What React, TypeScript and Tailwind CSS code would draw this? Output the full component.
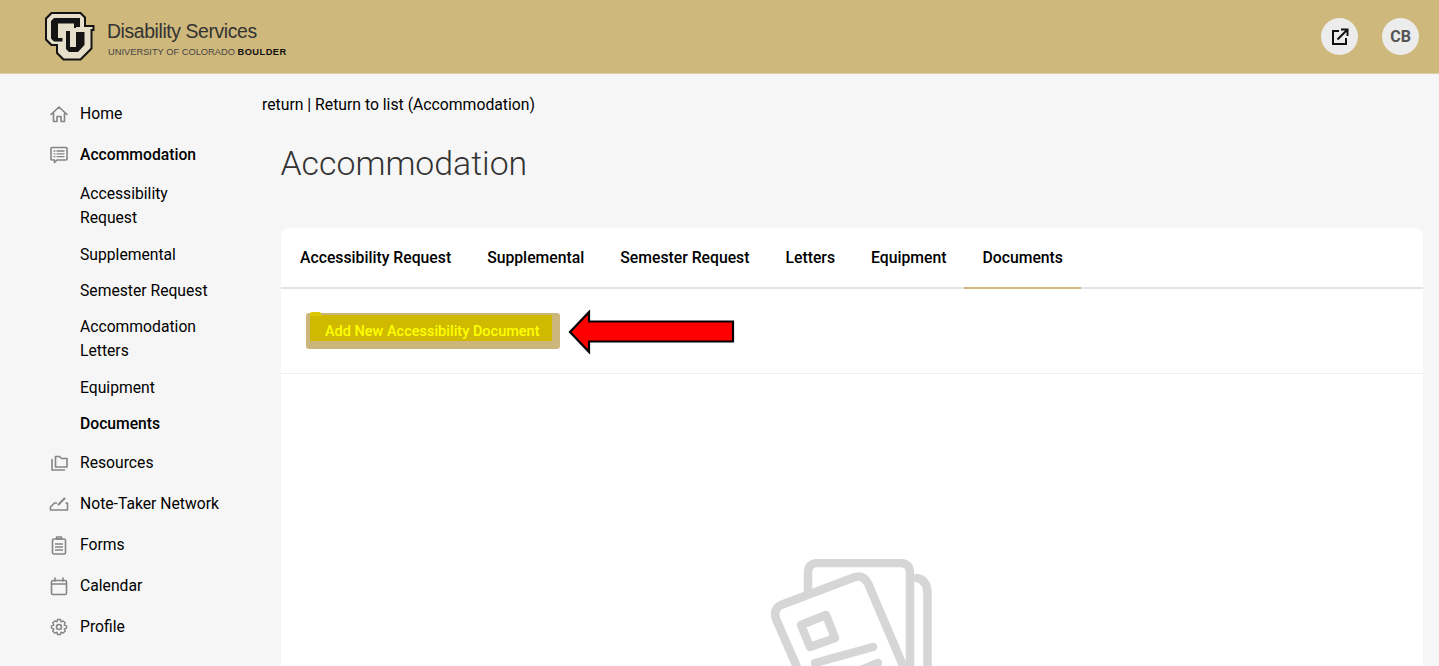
import React from "react";

const gray = "#858585";
const Ico = ({ children }: { children: React.ReactNode }) => (
  <svg width="20" height="20" viewBox="0 0 20 20" fill="none" stroke={gray} strokeWidth="1.6" strokeLinecap="round" strokeLinejoin="round" className="shrink-0">
    {children}
  </svg>
);

const icons: Record<string, React.ReactNode> = {
  home: <path d="M2 10.5 L10 3 L18 10.5 M4.5 9 V17.5 H8 V12.5 H12 V17.5 H15.5 V9" />,
  acc: (
    <>
      <path d="M3 2.5 H17 Q18 2.5 18 3.5 V14 Q18 15 17 15 H8 L5.5 17.5 V15 H3 Q2 15 2 14 V3.5 Q2 2.5 3 2.5 Z" />
      <path d="M5 6 H6 M8 6 H15 M5 8.8 H6 M8 8.8 H15 M5 11.6 H6 M8 11.6 H15" strokeWidth="1.3" />
    </>
  ),
  res: (
    <>
      <path d="M6.5 14 V3.5 H10.5 L12.5 5.5 H18 V14 Z" />
      <path d="M3 6.5 V17 H15.5" />
    </>
  ),
  note: (
    <>
      <path d="M7.5 9 H5.5 L1.5 13 V16 H18.5 V9 H17" />
      <path d="M9.5 10.5 L15.5 4.5" strokeWidth="2" />
    </>
  ),
  forms: (
    <>
      <rect x="3.5" y="4" width="13" height="15" rx="1.5" />
      <path d="M7.5 4 V2 H12.5 V4 Z M6.5 9 H13.5 M6.5 12 H13.5 M6.5 15 H13.5" strokeWidth="1.4" />
    </>
  ),
  cal: (
    <>
      <rect x="2.5" y="4.5" width="15" height="14" rx="1.5" />
      <path d="M2.5 8 H17.5 M6 2 V5 M14 2 V5" />
    </>
  ),
  prof: (
    <>
      <circle cx="10" cy="10" r="2.5" />
      <path d="M8.5 2.5 H11.5 L12 4.8 L14.2 3.9 L16.3 6 L15.2 8.1 L17.5 8.8 V11.2 L15.2 11.9 L16.3 14 L14.2 16.1 L12 15.2 L11.5 17.5 H8.5 L8 15.2 L5.8 16.1 L3.7 14 L4.8 11.9 L2.5 11.2 V8.8 L4.8 8.1 L3.7 6 L5.8 3.9 L8 4.8 Z" strokeWidth="1.4" />
    </>
  ),
};

const NavMain = ({ icon, label, bold }: { icon: string; label: string; bold?: boolean }) => (
  <div className="flex items-center gap-[11px] pl-[49px] h-[41px]">
    <Ico>{icons[icon]}</Ico>
    <span className={`text-[15.7px] text-black ${bold ? "font-medium" : ""}`}>{label}</span>
  </div>
);

const NavSub = ({ label, bold, mb = "mb-[12px]" }: { label: string; bold?: boolean; mb?: string }) => (
  <div className={`pl-[80px] pr-[46px] text-[15.7px] leading-[24.3px] text-black ${mb} ${bold ? "font-medium" : ""}`}>{label}</div>
);

const Logo = () => (
  <svg width="50" height="49" viewBox="0 0 50 49" className="shrink-0">
    <path d="M6 0 H36 L41 5 V13 H49.5 V19 H47.5 V37 L36 48.5 H18 L11 41.5 V34 H6 L0 28 V6 Z" fill="#141414" />
    <path d="M7 2 H35 L39 6 V15 H47.5 V17 H45.5 V36 L35 46.5 H19 L13 40.5 V32 H7 L2 27 V7 Z" fill="#e6dfc9" />
    <path d="M9 6 H35 V16 H29 V11.5 H13 V26 H19 V29.5 H9 L6 26.5 V9 Z" fill="#141414" />
    <path d="M14 15 H27 V20 H25.5 V36 H33.5 V20 H31 V15 H44 V20 H42 V34.5 L33.5 43 H23 L17.5 37.5 V20 H14 Z" fill="#e6dfc9" />
    <path d="M21 19 H25 V35 H31 V20 H39.5 V33 L33 40 H24 L21 37 Z" fill="#141414" />
    <path d="M25 22 H29 V34 H25 Z" fill="#e6dfc9" opacity="0.9" />
  </svg>
);

export default function App() {
  return (
    <div className="h-[666px] overflow-hidden bg-[#f6f6f6] text-black" style={{ fontFamily: "Roboto, sans-serif" }}>
      <header className="h-[74px] bg-[#cfb87c] flex items-center pl-[45px] pr-[20px] border-b border-[#dccfa8]">
        <Logo />
        <div className="ml-[12px] flex flex-col pt-[3px]" style={{ fontFamily: '"Liberation Sans", sans-serif' }}>
          <span className="text-[19.4px] leading-[24px] tracking-[-0.4px] text-[#333]">Disability Services</span>
          <span className="text-[9.3px] leading-[12px] mt-[3px] ml-[1px] text-[#444] whitespace-nowrap">
            UNIVERSITY OF COLORADO <b className="text-[#111] tracking-[0.45px]">BOULDER</b>
          </span>
        </div>
        <div className="ml-auto flex items-center gap-[24px]">
          <div className="w-[37px] h-[37px] rounded-full bg-[#ececec] flex items-center justify-center">
            <svg width="20" height="20" viewBox="0 0 20 20" fill="none" stroke="#111" strokeWidth="2">
              <path d="M9 4 H3 V17 H16 V11" />
              <path d="M7.5 12.5 L17 3 M11 2.5 H17.5 V9" />
            </svg>
          </div>
          <div className="w-[37px] h-[37px] rounded-full bg-[#ececec] flex items-center justify-center text-[16px] font-bold text-[#555]">CB</div>
        </div>
      </header>
      <div className="flex">
        <aside className="w-[262px] shrink-0 pt-[19px] flex flex-col">
          <NavMain icon="home" label="Home" />
          <NavMain icon="acc" label="Accommodation" bold />
          <div className="pt-[7px]">
            <NavSub label="Accessibility Request" />
            <NavSub label="Supplemental" />
            <NavSub label="Semester Request" />
            <NavSub label="Accommodation Letters" />
            <NavSub label="Equipment" />
            <NavSub label="Documents" bold mb="mb-[6px]" />
          </div>
          <NavMain icon="res" label="Resources" />
          <NavMain icon="note" label="Note-Taker Network" />
          <NavMain icon="forms" label="Forms" />
          <NavMain icon="cal" label="Calendar" />
          <NavMain icon="prof" label="Profile" />
        </aside>
        <main className="flex-1 min-w-0 pr-[16px]">
          <div className="text-[15.75px] leading-[24px] pt-[19px]">return | Return to list (Accommodation)</div>
          <h1 className="ml-[18.5px] mt-[26px] text-[33.8px] leading-[42px] font-light text-[#333]">Accommodation</h1>
          <section className="ml-[19px] mt-[43px] bg-white rounded-t-[8px] h-[500px]">
            <div className="flex h-[61px] pl-[1px] border-b-2 border-[#e4e4e4]">
              {["Accessibility Request", "Supplemental", "Semester Request", "Letters", "Equipment", "Documents"].map((t, i) => (
                <div key={t} className={`px-[18px] h-[61px] pt-[1px] flex items-center text-[15.76px] font-medium text-black border-b-2 ${i === 5 ? "border-[#cfb87c]" : "border-transparent"}`}>
                  {t}
                </div>
              ))}
            </div>
            <div className="h-[85px] border-b border-[#eeeeee] flex items-start pl-[25px] pt-[24px]">
              <div className="relative w-[254px] h-[36px] rounded-[3px] bg-[#cdb67b] shrink-0">
                <div className="absolute left-[4px] top-[2px] w-[242px] h-[26px] bg-[#cfba00] flex items-center pl-[15px] text-[14.5px] font-medium text-[#ffff00] pt-[7px] whitespace-nowrap">
                  Add New Accessibility Document
                </div>
                <div className="absolute left-[4px] -top-[1px] w-[11px] h-[4px] bg-[#dcc800] rounded-t-[2px]" />
              </div>
              <svg width="168" height="44" viewBox="0 0 168 44" className="ml-[8px] -mt-[3px] shrink-0">
                <path d="M2 22 L21 2 V11.5 H165 V31.5 H21 V42 Z" fill="#ff0000" stroke="#000" strokeWidth="2.2" />
              </svg>
            </div>
            <div className="flex justify-center pt-[185px]">
              <svg width="164" height="170" viewBox="0 0 164 170" fill="none" stroke="#d6d6d6" strokeWidth="8.5" strokeLinecap="round" strokeLinejoin="round" className="shrink-0 ml-[-1px]">
                <path d="M38 33 V14 Q38 4 48 4 H130 Q140 4 140 14 V170" />
                <path d="M147 19 Q157.5 21 157.5 35 V170" />
                <path d="M11 46 L85 18 Q95 15 100 29 L160 170 M11 46 Q3 50 6 60 L54 170" />
                <path d="M31 66 L56 56 L65 79 L40 88 Z" />
                <path d="M45 104 L103 88 M50 128 L108 104" />
              </svg>
            </div>
          </section>
        </main>
      </div>
    </div>
  );
}
